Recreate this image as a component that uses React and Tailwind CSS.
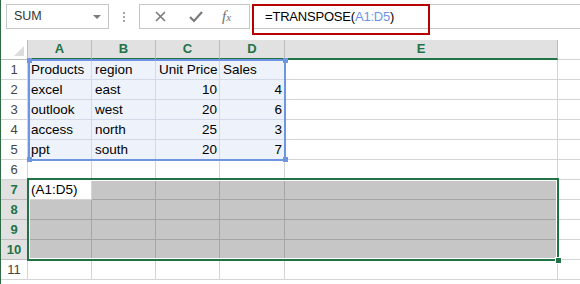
const COLS = [
  { key: "A", w: "w-[64px]" },
  { key: "B", w: "w-[64px]" },
  { key: "C", w: "w-[64px]" },
  { key: "D", w: "w-[65px]" },
  { key: "E", w: "w-[273px]" },
];

const DATA = {
  1: ["Products", "region", "Unit Price", "Sales"],
  2: ["excel", "east", 10, 4],
  3: ["outlook", "west", 20, 6],
  4: ["access", "north", 25, 3],
  5: ["ppt", "south", 20, 7],
};

const SELECTED = [7, 8, 9, 10];

function Cell({ w, value, row, col }) {
  const inRange = row >= 1 && row <= 5 && col < 4;
  const inSel = SELECTED.includes(row) && !(row === 7 && col === 0);
  const isNum = typeof value === "number";

  let cls = "bg-white border-[#d4d4d4]";
  if (inRange) cls = "bg-[#eef2fb] border-[#d3d9e6]";
  if (inSel) cls = "bg-[#c6c6c6] border-[#a5a5a5]";

  return (
    <div
      className={`${w} shrink-0 h-full border-r border-b ${cls} px-[3px] overflow-visible whitespace-nowrap leading-[19px] ${
        isNum ? "text-right pr-[2px]" : "text-left"
      }`}
    >
      {value ?? ""}
      {row === 7 && col === 0 ? "(A1:D5)" : ""}
    </div>
  );
}

function Row({ n }) {
  const sel = SELECTED.includes(n);
  const data = DATA[n] || [];
  return (
    <div className="flex h-[20px]">
      <div
        className={`w-[27px] shrink-0 border-r border-b text-center leading-[19px] text-[13px] ${
          sel
            ? "bg-[#e1e1e1] border-[#bdbdbd] text-[#217346] font-bold"
            : "bg-white border-[#d4d4d4] text-[#444]"
        }`}
      >
        {n}
      </div>
      {COLS.map((c, i) => (
        <Cell key={c.key} w={c.w} value={data[i]} row={n} col={i} />
      ))}
      <div className="flex-1 h-full border-b border-[#d4d4d4] bg-white" />
    </div>
  );
}

function Handle({ cls }) {
  return <div className={`absolute w-[5px] h-[5px] bg-[#6f95e0] ${cls}`} />;
}

export default function App() {
  return (
    <div
      className="relative w-[580px] h-[284px] overflow-hidden bg-white border-l border-[#2f6b45] text-black"
      style={{ fontFamily: '"Liberation Sans", Arial, sans-serif' }}
    >
      {/* formula bar */}
      <div className="flex items-start pt-[4px] h-[40px]">
        <div className="ml-[5px] w-[103px] h-[25px] border border-[#c6c6c6] flex items-center justify-between pl-[7px] pr-[7px]">
          <span className="text-[12.5px] text-[#333]">SUM</span>
          <span className="w-0 h-0 border-l-[4px] border-r-[4px] border-t-[4px] border-l-transparent border-r-transparent border-t-[#7a7a7a]" />
        </div>
        <div className="w-[30px] h-[25px] flex flex-col items-center justify-center gap-[2px]">
          <span className="w-[2px] h-[2px] bg-[#a8a8a8]" />
          <span className="w-[2px] h-[2px] bg-[#a8a8a8]" />
          <span className="w-[2px] h-[2px] bg-[#a8a8a8]" />
        </div>
        <div className="w-[111px] h-[25px] border border-[#c6c6c6] flex items-center">
          <svg width="40" height="23" viewBox="0 0 40 23" className="ml-[1px]">
            <path d="M15 7 L24 16 M24 7 L15 16" stroke="#7a7a7a" strokeWidth="1.6" />
          </svg>
          <svg width="30" height="23" viewBox="0 0 30 23">
            <path d="M9 12 L13 16 L21 7" stroke="#7a7a7a" strokeWidth="2.2" fill="none" />
          </svg>
          <span
            className="ml-[11px] italic text-[15px] text-[#6f6f6f] leading-none"
            style={{ fontFamily: '"Liberation Serif", serif' }}
          >
            f<span className="text-[11px]">x</span>
          </span>
        </div>
        <div className="ml-[3px] flex-1 h-[25px] border-y border-[#c6c6c6]" />
      </div>

      <div className="absolute left-[251px] top-[4px] w-[178px] h-[31px] border-2 border-[#b70000] flex items-center pl-[11px] pb-[5px] text-[13px] tracking-[-0.2px]">
        <span>=TRANSPOSE(</span>
        <span className="text-[#6e93e6]">A1:D5</span>
        <span>)</span>
      </div>

      {/* sheet */}
      <div className="text-[13.5px]">
        <div className="flex h-[20px]">
          <div className="w-[27px] shrink-0 border-r border-b border-[#bdbdbd] bg-white flex items-end justify-end pr-[3px] pb-[3px]">
            <svg width="10" height="10" viewBox="0 0 10 10">
              <polygon points="10,0 10,10 0,10" fill="#dcdcdc" />
            </svg>
          </div>
          {COLS.map((c) => (
            <div
              key={c.key}
              className={`${c.w} shrink-0 bg-[#e1e1e1] border-r border-[#bdbdbd] border-b-2 border-b-[#217346] text-center text-[13px] font-bold text-[#217346] leading-[18px]`}
            >
              {c.key}
            </div>
          ))}
          <div className="flex-1 bg-white border-b border-[#d4d4d4]" />
        </div>
        {[1, 2, 3, 4, 5, 6, 7, 8, 9, 10, 11].map((n) => (
          <Row key={n} n={n} />
        ))}
      </div>

      {/* A1:D5 range highlight */}
      <div className="absolute left-[27px] top-[59px] w-[258px] h-[102px] border-2 border-[#6f95e0]" />
      <Handle cls="left-[26px] top-[58px]" />
      <Handle cls="left-[282px] top-[58px]" />
      <Handle cls="left-[26px] top-[157px]" />
      <Handle cls="left-[282px] top-[157px]" />

      {/* A7:E10 selection */}
      <div className="absolute left-[26px] top-[178px] w-[532px] h-[83px] border-2 border-[#217346] shadow-[inset_0_0_0_1px_#fff]" />
      <div className="absolute left-[554px] top-[257px] w-[7px] h-[7px] bg-[#217346] border border-white" />
    </div>
  );
}
